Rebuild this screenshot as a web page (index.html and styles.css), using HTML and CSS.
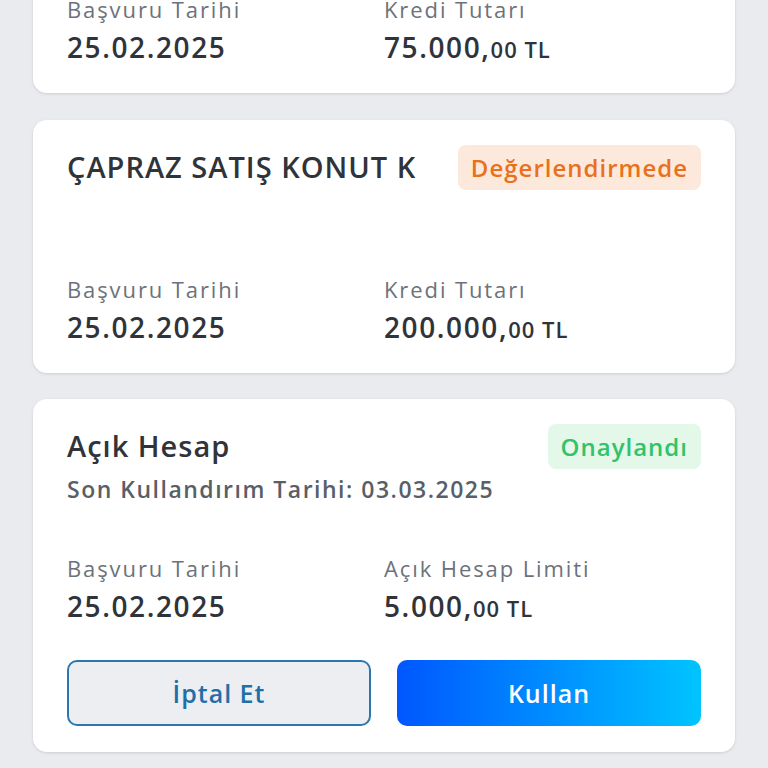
FILE: index.html
```html
<!DOCTYPE html>
<html lang="tr">
<head>
    <meta charset="UTF-8">
    <meta name="viewport" content="width=device-width, initial-scale=1.0">
    <title>Başvurularım</title>
    <link rel="stylesheet" href="styles.css">
</head>
<body>
    <div class="list">
        <div class="card">
            <div class="card-head">
                <div class="title">İHTİYAÇ KREDİSİ</div>
                <span class="badge pending">Değerlendirmede</span>
            </div>
            <div class="subtitle"></div>
            <div class="stats">
                <div>
                    <div class="label">Başvuru Tarihi</div>
                    <div class="value">25.02.2025</div>
                </div>
                <div>
                    <div class="label">Kredi Tutarı</div>
                    <div class="value">75.000,<small>00 TL</small></div>
                </div>
            </div>
        </div>

        <div class="card">
            <div class="card-head">
                <div class="title">ÇAPRAZ SATIŞ KONUT K</div>
                <span class="badge pending">Değerlendirmede</span>
            </div>
            <div class="subtitle"></div>
            <div class="stats">
                <div>
                    <div class="label">Başvuru Tarihi</div>
                    <div class="value">25.02.2025</div>
                </div>
                <div>
                    <div class="label">Kredi Tutarı</div>
                    <div class="value">200.000,<small>00 TL</small></div>
                </div>
            </div>
        </div>

        <div class="card">
            <div class="card-head">
                <div class="title">Açık Hesap</div>
                <span class="badge approved">Onaylandı</span>
            </div>
            <div class="subtitle">Son Kullandırım Tarihi: 03.03.2025</div>
            <div class="stats">
                <div>
                    <div class="label">Başvuru Tarihi</div>
                    <div class="value">25.02.2025</div>
                </div>
                <div>
                    <div class="label">Açık Hesap Limiti</div>
                    <div class="value">5.000,<small>00 TL</small></div>
                </div>
            </div>
            <div class="actions">
                <button class="btn-outline">İptal Et</button>
                <button class="btn-primary">Kullan</button>
            </div>
        </div>
    </div>
</body>
</html>
```

FILE: styles.css
```css
:root {
    --bg-color: #e9ebef;
    --card-bg: #ffffff;
    --text: #30343a;
    --muted: #6c727b;
    --sub: #595f67;
    --orange: #e9711c;
    --orange-bg: #fde9dc;
    --green: #33c26a;
    --green-bg: #e4f8ea;
    --blue: #1f6fa8;
}

body {
    margin: 0;
    height: 768px;
    overflow: hidden;
    font-family: "Open Sans", "Noto Sans", sans-serif;
    background: var(--bg-color);
    color: var(--text);
}

.list {
    display: flex;
    flex-direction: column;
    gap: 26.5px;
    margin-top: -160px;
    padding: 0 33px;
}

.card {
    background: var(--card-bg);
    border-radius: 14px;
    padding: 25px 34px 23px;
    box-shadow: 0 1px 3px rgba(0, 0, 0, 0.12);
}

.card-head {
    display: flex;
    justify-content: space-between;
    align-items: flex-start;
}

.title {
    font-size: 29px;
    font-weight: 600;
    line-height: 43px;
    letter-spacing: 1px;
}

.badge {
    height: 45px;
    line-height: 45px;
    padding: 0 13px;
    border-radius: 8px;
    font-size: 24px;
    font-weight: 600;
    letter-spacing: 1px;
}

.pending { background: var(--orange-bg); color: var(--orange); }
.approved { background: var(--green-bg); color: var(--green); }

.subtitle {
    height: 40px;
    line-height: 40px;
    font-size: 23px;
    font-weight: 600;
    letter-spacing: 1.5px;
    color: var(--sub);
}

.stats {
    display: grid;
    grid-template-columns: 1fr 1fr;
    margin-top: 44px;
}

.label {
    font-size: 22px;
    line-height: 30px;
    letter-spacing: 1.9px;
    color: var(--muted);
}

.value {
    font-size: 28px;
    font-weight: 600;
    line-height: 46px;
    letter-spacing: 1.6px;
}

.value small {
    font-size: 22px;
    line-height: 1;
    letter-spacing: 1px;
}

.actions {
    display: grid;
    grid-template-columns: 1fr 1fr;
    gap: 26px;
    margin: 31px 0 3px;
}

button {
    height: 66px;
    border-radius: 10px;
    font-family: inherit;
    font-size: 25px;
    font-weight: 600;
    letter-spacing: 1px;
}

.btn-outline {
    border: 2px solid #2b78b0;
    background: #eceef2;
    color: var(--blue);
}

.btn-primary {
    border: none;
    background: linear-gradient(90deg, #0057ff, #00c4ff);
    color: #ffffff;
}
```
